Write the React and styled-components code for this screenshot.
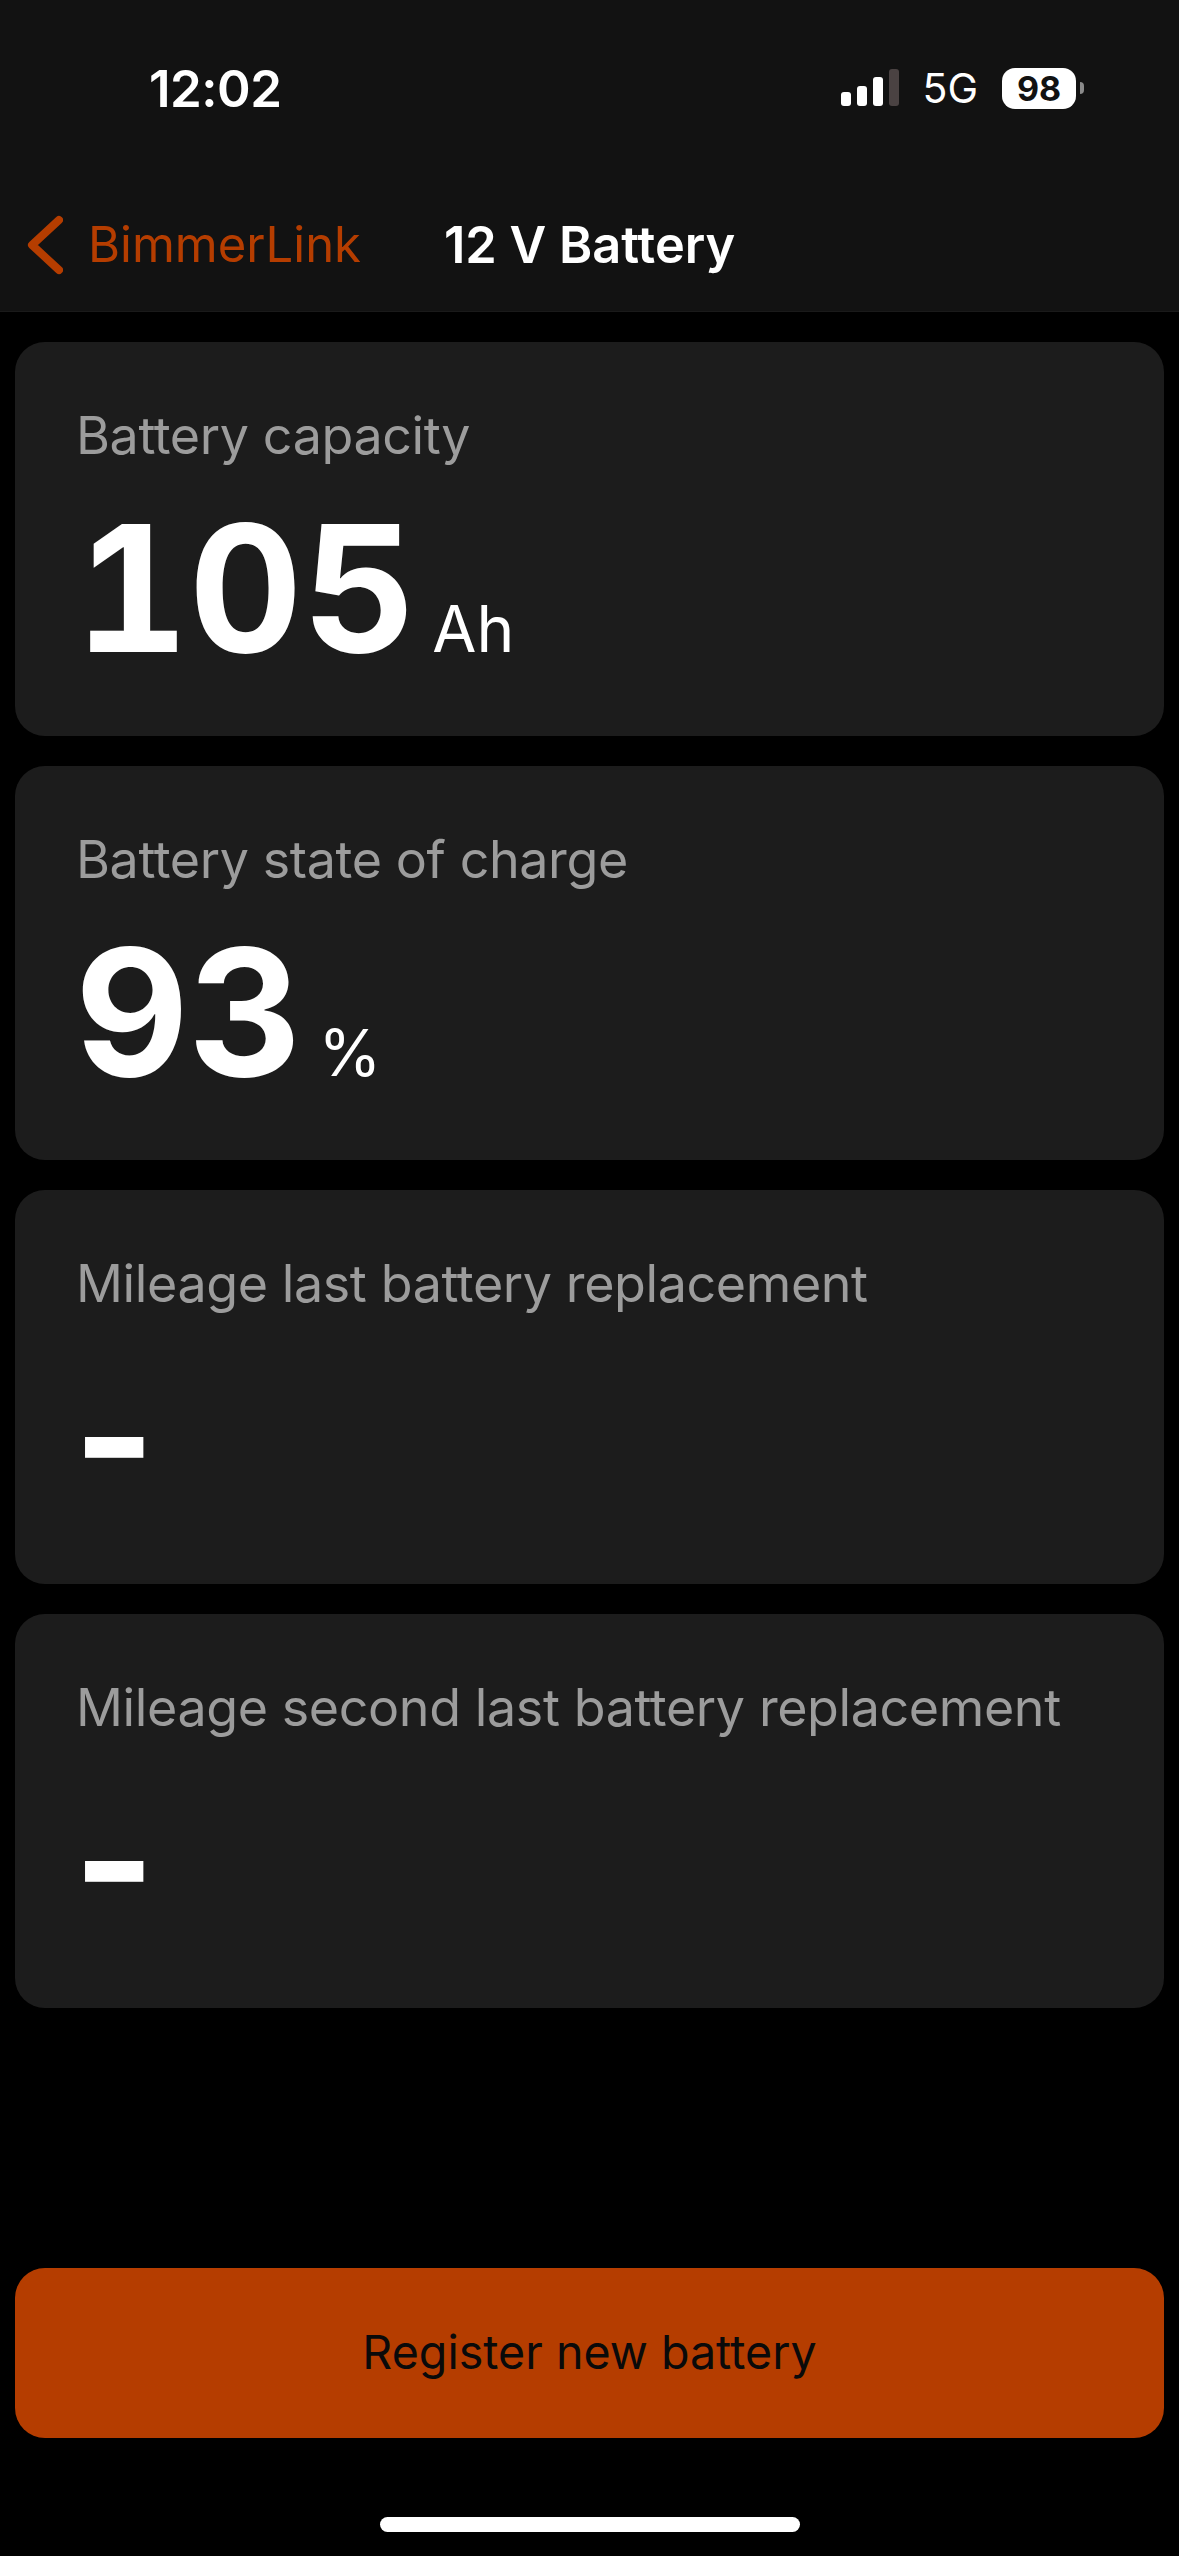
import React from "react";
import styled, { createGlobalStyle } from "styled-components";

const GlobalStyle = createGlobalStyle`
  html, body {
    margin: 0;
    padding: 0;
    background: #000;
  }
  * {
    box-sizing: border-box;
  }
`;

const Page = styled.div`
  width: 1179px;
  height: 2556px;
  display: flex;
  flex-direction: column;
  background: #000;
  font-family: Inter, "Liberation Sans", sans-serif;
  overflow: hidden;
`;

const Header = styled.header`
  height: 312px;
  flex-shrink: 0;
  display: flex;
  flex-direction: column;
  background: #121212;
  border-bottom: 1px solid #1a1a1a;
`;

const StatusBar = styled.div`
  height: 176px;
  padding: 0 95px 0 149px;
  display: flex;
  align-items: center;
  justify-content: space-between;
`;

const Time = styled.span`
  color: #fff;
  font-size: 51px;
  font-weight: 600;
  letter-spacing: -0.5px;
`;

const StatusIcons = styled.div`
  display: flex;
  align-items: center;
`;

const Network = styled.span`
  color: #fff;
  font-size: 41px;
  font-weight: 400;
  margin: 0 24px 0 23px;
`;

const Battery = styled.div`
  width: 74px;
  height: 41px;
  border-radius: 13px;
  background: #fff;
  color: #121212;
  font-size: 34px;
  font-weight: 700;
  display: flex;
  align-items: center;
  justify-content: center;
`;

const BatteryCap = styled.div`
  width: 4px;
  height: 12px;
  margin-left: 4px;
  border-radius: 0 4px 4px 0;
  background: #8a8a8a;
`;

const NavBar = styled.nav`
  flex: 1;
  padding: 2px 0 0 27px;
  display: flex;
  align-items: center;
`;

const BackLabel = styled.span`
  color: #b53d00;
  font-size: 49px;
  margin-left: 25px;
  width: 356px;
`;

const Title = styled.span`
  color: #fff;
  font-size: 50.5px;
  font-weight: 600;
`;

const Content = styled.main`
  flex: 1;
  display: flex;
  flex-direction: column;
  padding: 30px 15px 0;
`;

const Cards = styled.div`
  display: flex;
  flex-direction: column;
  gap: 30px;
`;

const Card = styled.section`
  height: 394px;
  padding: 62px 61px 0;
  border-radius: 30px;
  background: #1c1c1c;
`;

const Label = styled.div`
  color: #9c9c9c;
  font-size: 52px;
  line-height: 64px;
  letter-spacing: -0.4px;
`;

const ValueRow = styled.div`
  display: flex;
  align-items: baseline;
  margin: 20px 0 0 -1px;
`;

const Value = styled.span`
  color: #fff;
  font-size: 176px;
  line-height: 200px;
  font-weight: 700;
  margin-left: ${(p) => (p.$empty ? "-2px" : "0")};
  font-variant-numeric: ${(p) => (p.$empty ? "normal" : "tabular-nums")};
`;

const Unit = styled.span`
  color: #fff;
  font-size: 64px;
  margin-left: 16px;
`;

const RegisterButton = styled.button`
  height: 170px;
  margin-top: 260px;
  padding-bottom: 3px;
  border: none;
  border-radius: 30px;
  background: #b53d00;
  color: #0a0a0a;
  font-family: inherit;
  font-size: 46.6px;
`;

const HomeBar = styled.div`
  width: 420px;
  height: 15px;
  margin: 79px auto 0;
  border-radius: 8px;
  background: #fff;
`;

const SignalBars = () => (
  <svg width="58" height="38" viewBox="0 0 58 38">
    <rect x="0" y="23" width="10" height="14" rx="3" fill="#fff" />
    <rect x="16" y="17" width="10" height="20" rx="3" fill="#fff" />
    <rect x="32" y="8" width="10" height="29" rx="3" fill="#fff" />
    <rect x="48" y="0" width="10" height="37" rx="3" fill="#4a4242" />
  </svg>
);

const BackChevron = () => (
  <svg width="36" height="60" viewBox="0 0 36 60">
    <path d="M32 5 L5 30 L32 55" fill="none" stroke="#b53d00" strokeWidth="8" strokeLinecap="round" strokeLinejoin="round" />
  </svg>
);

const readings = [
  { label: "Battery capacity", value: "105", unit: "Ah" },
  { label: "Battery state of charge", value: "93", unit: "%" },
  { label: "Mileage last battery replacement", value: "-" },
  { label: "Mileage second last battery replacement", value: "-" },
];

const App = () => {
  return (
    <Page>
      <GlobalStyle />
      <Header>
        <StatusBar>
          <Time>12:02</Time>
          <StatusIcons>
            <SignalBars />
            <Network>5G</Network>
            <Battery>98</Battery>
            <BatteryCap />
          </StatusIcons>
        </StatusBar>
        <NavBar>
          <BackChevron />
          <BackLabel>BimmerLink</BackLabel>
          <Title>12 V Battery</Title>
        </NavBar>
      </Header>
      <Content>
        <Cards>
          {readings.map((r) => (
            <Card key={r.label}>
              <Label>{r.label}</Label>
              <ValueRow>
                <Value $empty={!r.unit}>{r.value}</Value>
                {r.unit && <Unit>{r.unit}</Unit>}
              </ValueRow>
            </Card>
          ))}
        </Cards>
        <RegisterButton>Register new battery</RegisterButton>
        <HomeBar />
      </Content>
    </Page>
  );
};

export default App;
